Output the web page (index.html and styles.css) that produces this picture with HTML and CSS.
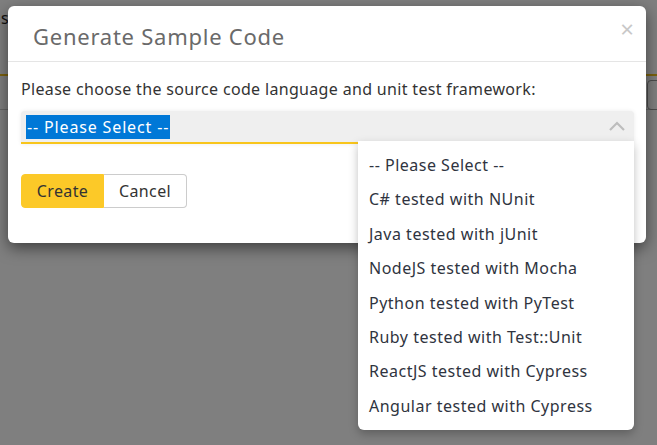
FILE: index.html
```html
<!DOCTYPE html>
<html>
<head>
<meta charset="utf-8">
<link rel="stylesheet" href="styles.css">
</head>
<body>
<div class="page">
  <div class="page-top"><span class="page-title">s</span></div>
  <div class="page-bar"><span class="page-box"></span></div>
</div>
<div class="overlay"></div>
<div class="modal">
  <div class="modal-header">
    <h4 class="modal-title">Generate Sample Code</h4>
    <span class="close">&times;</span>
  </div>
  <div class="modal-body">
    <p class="prompt">Please choose the source code language and unit test framework:</p>
    <div class="select">
      <span class="select-value">-- Please Select --</span>
      <svg class="chevron" width="18" height="12" viewBox="0 0 18 12"><path d="M2 10 L9 3 L16 10" fill="none" stroke="#bdbdbd" stroke-width="2.2"/></svg>
      <ul class="options">
        <li>-- Please Select --</li>
        <li>C# tested with NUnit</li>
        <li>Java tested with jUnit</li>
        <li>NodeJS tested with Mocha</li>
        <li>Python tested with PyTest</li>
        <li>Ruby tested with Test::Unit</li>
        <li>ReactJS tested with Cypress</li>
        <li>Angular tested with Cypress</li>
      </ul>
    </div>
    <div class="btn-group">
      <button class="btn btn-primary">Create</button>
      <button class="btn btn-default">Cancel</button>
    </div>
  </div>
</div>
</body>
</html>
```
FILE: styles.css
```css
* { box-sizing: border-box; }
html, body { margin: 0; height: 100%; }
body {
  font-family: "Noto Sans", "Open Sans", sans-serif;
  background: #ffffff;
  overflow: hidden;
  position: relative;
}
.page { padding-top: 8px; }
.page-top {
  height: 68px;
  border-bottom: 2px solid #f8c51c;
  padding-left: 1px;
  font-size: 16px;
  line-height: 20px;
  color: #222;
}
.page-bar {
  height: 34px;
  border-bottom: 1px solid #ccc;
  display: flex;
  justify-content: flex-end;
  padding-top: 4px;
}
.page-box {
  width: 30px;
  height: 30px;
  border: 1px solid #999;
  border-radius: 4px;
  margin-right: -20px;
}
.overlay {
  position: absolute;
  inset: 0;
  background: rgba(0, 0, 0, 0.5);
}
.modal {
  position: absolute;
  left: 8px;
  top: 6px;
  width: 638px;
  height: 237px;
  background: #fff;
  border-radius: 6px;
  box-shadow: 0 5px 15px rgba(0, 0, 0, 0.5);
}
.modal-header {
  height: 56px;
  border-bottom: 1px solid #e5e5e5;
  display: flex;
  align-items: center;
  justify-content: space-between;
  padding: 0 12px 0 25px;
}
.modal-title {
  margin: 0;
  font-weight: 400;
  font-size: 22px;
  letter-spacing: 0.75px;
  color: #6a6a6a;
  padding-top: 4px;
}
.close {
  font-size: 24px;
  color: #c8c8c8;
  line-height: 1;
  margin-top: -10px;
}
.modal-body { padding: 15px 12px 0 13px; }
.prompt {
  margin: 0 0 10px;
  font-size: 16px;
  letter-spacing: 0.33px;
  color: #333;
  line-height: 24px;
}
.select {
  position: relative;
  height: 33px;
  background: #efefef;
  border-bottom: 2px solid #f8c51c;
  border-radius: 4px 4px 0 0;
  display: flex;
  align-items: center;
  justify-content: space-between;
  padding: 0 8px 0 5px;
  box-shadow: 0 0 4px rgba(0, 0, 0, 0.08);
}
.select-value {
  background: #0078d7;
  color: #fff;
  font-size: 16px;
  letter-spacing: 0.85px;
  line-height: 24px;
  padding: 0 1px;
}
.chevron { margin-top: -2px; }
.options {
  position: absolute;
  list-style: none;
  margin: 0;
  right: 0;
  top: 30px;
  width: 276px;
  background: #fff;
  border-radius: 0 0 6px 6px;
  box-shadow: 0 4px 10px rgba(0, 0, 0, 0.25);
  padding: 7px 0 7px 11px;
  z-index: 2;
}
.options li {
  font-size: 16px;
  letter-spacing: 0.5px;
  line-height: 34.4px;
  color: #2f3440;
}
.btn-group { display: flex; margin-top: 30px; }
.btn {
  font-family: inherit;
  font-size: 16px;
  letter-spacing: 0.4px;
  height: 34px;
  width: 83px;
  color: #333;
  cursor: pointer;
}
.btn-primary {
  background: #fcc928;
  border: 1px solid #fcc928;
  border-radius: 4px 0 0 4px;
}
.btn-default {
  background: #fff;
  border: 1px solid #ccc;
  border-left: none;
  border-radius: 0 4px 4px 0;
}
```
